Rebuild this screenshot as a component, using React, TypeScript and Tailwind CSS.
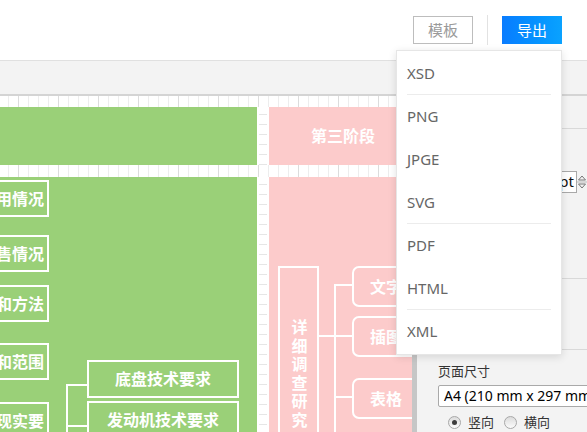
import React from 'react'

// Export formats shown in the dropdown
const formats = [
  { label: 'XSD', divider: true },
  { label: 'PNG' },
  { label: 'JPGE' },
  { label: 'SVG', divider: true },
  { label: 'PDF' },
  { label: 'HTML', divider: true },
  { label: 'XML' },
]

const sideBoxes = [
  { text: '用情况', top: 3 },
  { text: '售情况', top: 58 },
  { text: '和方法', top: 108 },
  { text: '和范围', top: 166 },
  { text: '现实要', top: 225 },
]

function SideBox({ text, top }: { text: string; top: number }) {
  return (
    <div
      className="absolute left-[-80px] w-[129px] h-[37px] border-2 border-white flex items-center justify-end pr-[3px] overflow-hidden"
      style={{ top }}
    >
      <span className="whitespace-nowrap text-[16px] font-bold text-white leading-none">{text}</span>
    </div>
  )
}

function GreenDetail() {
  return (
    <div className="relative w-[257px] h-[280px] bg-[#9ad078] shrink-0">
      {sideBoxes.map((b) => (
        <SideBox key={b.text} text={b.text} top={b.top} />
      ))}

      {/* connector */}
      <div className="absolute left-[66px] top-[207px] w-[2px] h-[80px] bg-white" />
      <div className="absolute left-[66px] top-[207px] w-[21px] h-[2px] bg-white" />
      <div className="absolute left-[66px] top-[248px] w-[21px] h-[2px] bg-white" />

      <div className="absolute left-[87px] top-[183px] w-[152px] h-[38px] border-2 border-white flex items-center justify-center">
        <span className="text-[16px] font-bold text-white leading-none">底盘技术要求</span>
      </div>
      <div className="absolute left-[87px] top-[224px] w-[152px] h-[38px] border-2 border-white flex items-center justify-center">
        <span className="text-[16px] font-bold text-white leading-none">发动机技术要求</span>
      </div>
    </div>
  )
}

function PinkDetail() {
  return (
    <div className="relative w-[148px] h-[280px] bg-[#fccbcb] shrink-0">
      <div className="absolute left-[9px] top-[89px] w-[41px] h-[220px] border-2 border-white flex justify-center pt-[51px]">
        <span className="[writing-mode:vertical-rl] [text-orientation:upright] text-[16px] font-bold text-white leading-none tracking-[2.6px]">
          详细调查研究
        </span>
      </div>

      {/* connectors */}
      <div className="absolute left-[49px] top-[158px] w-[17px] h-[2px] bg-white" />
      <div className="absolute left-[65px] top-[107px] w-[2px] h-[180px] bg-white" />
      <div className="absolute left-[65px] top-[107px] w-[18px] h-[2px] bg-white" />
      <div className="absolute left-[65px] top-[158px] w-[18px] h-[2px] bg-white" />
      <div className="absolute left-[65px] top-[219px] w-[18px] h-[2px] bg-white" />

      {[
        { t: '文字', top: 89 },
        { t: '插图', top: 139 },
        { t: '表格', top: 201 },
      ].map((b) => (
        <div
          key={b.t}
          className="absolute left-[83px] w-[68px] h-[41px] border-2 border-white rounded-[7px] flex items-center justify-center"
          style={{ top: b.top }}
        >
          <span className="text-[16px] font-bold text-white leading-none">{b.t}</span>
        </div>
      ))}
    </div>
  )
}

function VGap() {
  return (
    <div className="w-[12px] shrink-0 bg-white px-[2px]">
      <div className="h-full bg-[image:repeating-linear-gradient(180deg,transparent_0_7px,#e6e6e6_7px_8px,transparent_8px_10px)]" />
    </div>
  )
}

function Canvas() {
  return (
    <div className="w-[412px] shrink-0 overflow-hidden flex flex-col bg-white bg-[image:repeating-linear-gradient(90deg,transparent_0_18px,#dcdcdc_18px_19px,transparent_19px_40px),repeating-linear-gradient(90deg,transparent_0_8px,#ededed_8px_9px,transparent_9px_10px)]">
      <div className="h-[11px] shrink-0" />
      <div className="flex h-[58px] shrink-0">
        <div className="w-[257px] shrink-0 bg-[#9ad078]" />
        <VGap />
        <div className="w-[148px] shrink-0 bg-[#fccbcb] flex items-center justify-center">
          <span className="text-[16px] font-bold text-white leading-none">第三阶段</span>
        </div>
      </div>
      <div className="h-[12px] shrink-0" />
      <div className="flex flex-1">
        <GreenDetail />
        <VGap />
        <PinkDetail />
      </div>
    </div>
  )
}

function Radio({ checked, label }: { checked?: boolean; label: string }) {
  return (
    <label className="flex items-center gap-[7px]">
      <span className="w-[13px] h-[13px] rounded-full border border-[#a8a8a8] bg-linear-to-b from-[#dcdcdc] to-[#fbfbfb] flex items-center justify-center">
        {checked && <span className="w-[5px] h-[5px] rounded-full bg-[#3c3c3c]" />}
      </span>
      <span className="text-[13px] text-[#333] leading-none">{label}</span>
    </label>
  )
}

function Panel() {
  return (
    <aside className="flex-1 flex flex-col border-l-[5px] border-[#c6c6c6] bg-[#f3f3f3] overflow-hidden">
      <div className="h-[33px] shrink-0 border-b border-[#d9d9d9]" />
      <div className="h-[150px] shrink-0 border-b border-[#d9d9d9] pt-[42px]">
        <div className="flex justify-end items-start">
          <div className="w-[60px] h-[22px] bg-white border border-[#a9a9a9] text-right pr-[2px] text-[15px] leading-[19px] text-[#111]">
            pt
          </div>
          <svg className="w-[10px] h-[20px] mt-[1px]" viewBox="0 0 10 20" fill="none" stroke="#777" strokeWidth="1">
            <path d="M1.5 8 L5 4 L8.5 8 Z" />
            <path d="M1.5 12 L5 16 L8.5 12 Z" />
            <path d="M0 10 H10" stroke="#bbb" />
          </svg>
        </div>
      </div>
      <div className="h-[71px] shrink-0 border-b border-[#d9d9d9]" />
      <div className="pl-[21px] pt-[13px]">
        <div className="text-[13px] text-[#333] leading-[16px]">页面尺寸</div>
        <div className="mt-[6px] w-[170px] h-[22px] bg-white border border-[#a9a9a9] rounded-[2px] pl-[5px] text-[14px] leading-[20px] text-black whitespace-nowrap">
          A4 (210 mm x 297 mm)
        </div>
        <div className="mt-[9px] ml-[10px] flex items-center gap-[10px]">
          <Radio checked label="竖向" />
          <Radio label="横向" />
        </div>
      </div>
    </aside>
  )
}

function ExportMenu() {
  return (
    <div className="absolute left-[396px] top-[50px] w-[166px] bg-white border border-[#e6e6e6] shadow-[0_2px_8px_rgba(0,0,0,0.12)] pt-[1px] pb-[1px]">
      {formats.map((f) => (
        <div
          key={f.label}
          className={`mx-[10px] h-[43px] flex items-center text-[15px] text-[#666] ${
            f.divider ? 'border-b border-[#ececec]' : ''
          }`}
        >
          {f.label}
        </div>
      ))}
    </div>
  )
}

export default function App() {
  return (
    <div className="relative w-[587px] h-[432px] overflow-hidden bg-white font-['Noto_Sans','Noto_Sans_CJK_SC',sans-serif]">
      {/* Header */}
      <header className="h-[60px] flex items-center justify-end pr-[25px]">
        <button className="w-[60px] h-[28px] border border-[#bdbdbd] text-[15px] text-[#9a9a9a] leading-none">
          模板
        </button>
        <div className="w-px h-[30px] bg-[#e2e2e2] mx-[14px]" />
        <button className="w-[60px] h-[28px] bg-linear-to-r from-[#0a7cff] to-[#0aa2ff] text-[15px] text-white leading-none">
          导出
        </button>
      </header>

      {/* Toolbar strip */}
      <div className="h-[36px] border-t border-[#e0e0e0] border-b-2 border-b-[#d4d4d4] bg-[#f3f3f3]" />

      <div className="flex h-[336px]">
        <Canvas />
        <Panel />
      </div>

      <ExportMenu />
    </div>
  )
}
